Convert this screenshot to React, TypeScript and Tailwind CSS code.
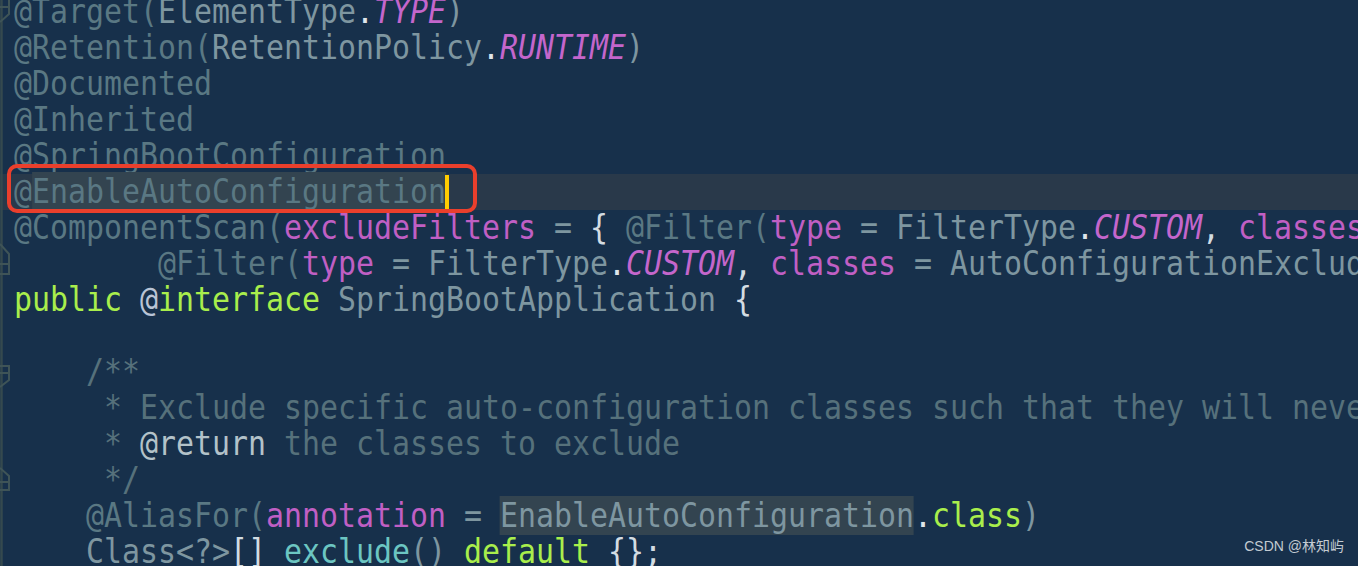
import React from 'react';

type Tok = [string, string?];

const ann = 'text-[#5a7883]';
const id = 'text-[#7e96a0]';
const dot = 'text-[#dfe6ea]';
const cst = 'text-[#c466cc] italic';
const prm = 'text-[#c05fc4]';
const kw = 'text-[#a9ee4c]';
const wh = 'text-[#d3dce2]';
const cm = 'text-[#56717b]';

const lines: Tok[][] = [
  [['@Target(', ann], ['ElementType', id], ['.', dot], ['TYPE', cst], [')', id]],
  [['@Retention(', ann], ['RetentionPolicy', id], ['.', dot], ['RUNTIME', cst], [')', id]],
  [['@Documented', ann]],
  [['@Inherited', ann]],
  [['@SpringBootConfiguration', ann]],
  [],
  [
    ['@ComponentScan(', ann],
    ['excludeFilters', prm],
    [' = ', id],
    ['{ ', wh],
    ['@Filter(', ann],
    ['type', prm],
    [' = ', id],
    ['FilterType', id],
    ['.', dot],
    ['CUSTOM', cst],
    [', ', wh],
    ['classes', prm],
    [' = ', id],
    ['TypeExcludeFilter', id],
    ['.', dot],
    ['class', kw],
    ['),', id],
  ],
  [
    ['        @Filter(', ann],
    ['type', prm],
    [' = ', id],
    ['FilterType', id],
    ['.', dot],
    ['CUSTOM', cst],
    [', ', wh],
    ['classes', prm],
    [' = ', id],
    ['AutoConfigurationExcludeFilter', id],
    ['.', dot],
    ['class', kw],
    [') })', id],
  ],
  [['public ', kw], ['@', 'text-[#b9c4d6]'], ['interface ', kw], ['SpringBootApplication ', id], ['{', wh]],
  [],
  [['    /**', cm]],
  [['     * Exclude specific auto-configuration classes such that they will never be applied.', cm]],
  [['     * ', cm], ['@return', 'text-[#b3c2c9]'], [' the classes to exclude', cm]],
  [['     */', cm]],
  [],
  [['    Class<?>', id], ['[]', wh], [' ', id], ['exclude', 'text-[#6cc6c2]'], ['() ', id], ['default ', kw], ['{};', wh]],
];

const FoldMarkers = () => (
  <svg className="absolute left-0 top-0 pointer-events-none" width="12" height="566" viewBox="0 0 12 566">
    <line x1="1.5" y1="0" x2="1.5" y2="566" stroke="#35494e" strokeWidth="2.5" />
    <g fill="none" stroke="#3f5457" strokeWidth="2">
      <polyline points="0,-2 9,-2 9,14 0,22" />
      <line x1="0" y1="7" x2="9" y2="7" />
      <polyline points="0,244 9,254 9,274 0,274" />
      <line x1="0" y1="264" x2="9" y2="264" />
      <polyline points="0,366 9,366 9,380 0,387" />
      <line x1="0" y1="373" x2="9" y2="373" />
      <polyline points="0,468 9,476 9,490 0,490" />
      <line x1="0" y1="482" x2="9" y2="482" />
    </g>
  </svg>
);

const Text = ({ children }: { children: React.ReactNode }) => (
  <span className="inline-block origin-left scale-x-[0.906] whitespace-pre">{children}</span>
);

export default function App() {
  return (
    <div
      className="relative w-[1358px] h-[566px] overflow-hidden bg-[#17304b]"
      style={{ fontFamily: '"DejaVu Sans Mono", monospace' }}
    >
      <div className="-mt-[6px] flex flex-col text-[33px]">
        {lines.map((toks, i) => {
          if (i === 5) {
            return (
              <div key={i} className="relative h-[36px] leading-[36px] pl-[14px] bg-[#29394a] whitespace-nowrap">
                <Text>
                  <span className={ann}>@</span>
                  <span className={`${ann} bg-[#334450]`}>EnableAutoConfiguration</span>
                </Text>
                <span className="absolute left-[445px] top-[1px] w-[4px] h-[35px] bg-[#ffcc00]" />
              </div>
            );
          }
          if (i === 14) {
            return (
              <div key={i} className="h-[36px] leading-[36px] pl-[14px] whitespace-nowrap">
                <Text>
                  <span className={ann}>{'    @AliasFor('}</span>
                  <span className={prm}>annotation</span>
                  <span className={id}>{' = '}</span>
                  <span className={`${id} bg-[#334450]`}>EnableAutoConfiguration</span>
                  <span className={dot}>.</span>
                  <span className={kw}>class</span>
                  <span className={id}>)</span>
                </Text>
              </div>
            );
          }
          return (
            <div key={i} className="h-[36px] leading-[36px] pl-[14px] whitespace-nowrap">
              <Text>
                {toks.map(([t, c], j) => (
                  <span key={j} className={c}>
                    {t}
                  </span>
                ))}
              </Text>
            </div>
          );
        })}
      </div>

      <FoldMarkers />

      <div className="absolute left-[7px] top-[164px] w-[470px] h-[49px] rounded-[10px] border-[4px] border-[#ea3f2c]" />

      <div
        className="absolute right-[14px] bottom-[9px] text-[14px] text-[#c3cbd2]"
        style={{ fontFamily: '"Liberation Sans", "Noto Sans CJK SC", sans-serif' }}
      >
        CSDN @林知屿
      </div>
    </div>
  );
}
